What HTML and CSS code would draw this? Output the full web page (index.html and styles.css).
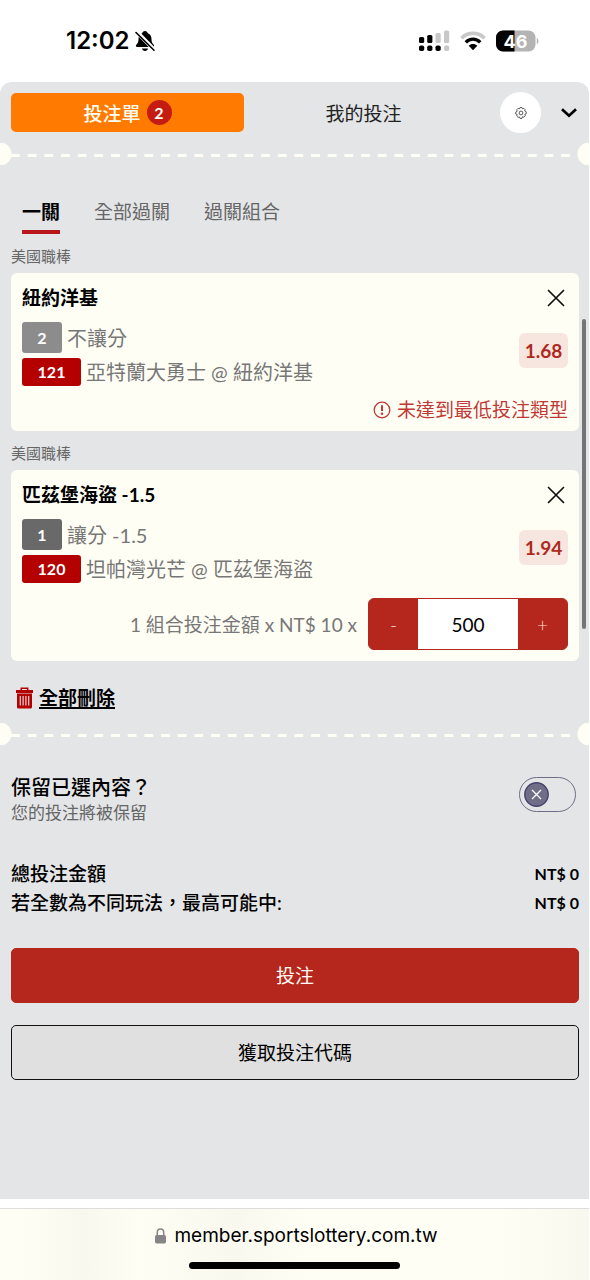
FILE: index.html
```html
<!DOCTYPE html>
<html lang="zh-Hant">
<head>
<meta charset="utf-8">
<meta name="viewport" content="width=device-width, initial-scale=1">
<title>投注單</title>
<link rel="stylesheet" href="styles.css">
</head>
<body>
<div class="page">
  <header class="status">
    <div class="status-left">
      <span class="time">12:02</span>
      <svg width="20" height="22" viewBox="0 0 20 22" aria-hidden="true">
        <path d="M10 1c-1.500 0-2.600 1-2.800 2.300C4.500 4.300 3.500 6.700 3.500 9.300c0 3-1 4.300-2.200 5.500-.8.9-.4 2.200.9 2.200h15.600c1.300 0 1.700-1.300.9-2.200-1.200-1.200-2.200-2.500-2.200-5.500 0-2.600-1-5-3.700-6C12.600 2 11.500 1 10 1z"/>
        <path d="M7 18.500h6c-.3 1.500-1.500 2.500-3 2.500s-2.700-1-3-2.500z"/>
        <path d="M1.500 1.500l18 18.500" stroke="#fff" stroke-width="4"/>
        <path d="M1 2.500l18 17.800" stroke="#000" stroke-width="1.600" stroke-linecap="round"/>
      </svg>
    </div>
    <div class="status-right">
      <svg width="31" height="22" viewBox="0 0 31 22" aria-hidden="true">
        <g fill="#c8c8c8"><rect x="16.500" y="3" width="5.200" height="10" rx="1.500"/><rect x="25" y="0.500" width="5.200" height="12.500" rx="1.500"/><rect x="25" y="15.500" width="5.200" height="5.500" rx="1.800"/></g>
        <rect x="0" y="7" width="5.200" height="6" rx="1.500"/><rect x="8.200" y="5" width="5.200" height="8" rx="1.500"/>
        <rect x="0" y="15.500" width="5.200" height="5.500" rx="1.800"/><rect x="8.200" y="15.500" width="5.200" height="5.500" rx="1.800"/><rect x="16.500" y="15.500" width="5.200" height="5.500" rx="1.800"/>
      </svg>
      <svg width="26" height="20" viewBox="0 0 26 20" fill="none" aria-hidden="true">
        <path d="M1.500 7.200C7.500.7 18.500.7 24.500 7.200" stroke="#c8c8c8" stroke-width="3.600"/>
        <path d="M5.800 11.300c4-4.200 10.400-4.200 14.400 0" stroke="#000" stroke-width="3.400"/>
        <path d="M8.700 14.800c2.300-2.500 6.300-2.500 8.600 0L13 19.200z" fill="#000"/>
      </svg>
      <svg width="43" height="22" viewBox="0 0 43 22" aria-hidden="true">
        <rect x="0" y="0.500" width="39.500" height="21" rx="7" fill="#b4b4b4"/>
        <path d="M7 .5h11.500v21H7a7 7 0 0 1-7-7v-7a7 7 0 0 1 7-7z"/>
        <path d="M40.800 8c2 .4 2.400 5.600 0 6z" fill="#b4b4b4"/>
        <text class="battery-text" x="19.500" y="17.500" text-anchor="middle">46</text>
      </svg>
    </div>
  </header>

  <main class="slip">
    <div class="topbar">
      <button class="top-tab top-tab-active" type="button">投注單<span class="count">2</span></button>
      <button class="top-tab" type="button">我的投注</button>
      <button class="gear" type="button" aria-label="設定">
        <svg width="12" height="12" viewBox="0 0 12 12" fill="none" stroke="#333" stroke-width=".8" stroke-linejoin="round" aria-hidden="true">
          <path d="M5 .6h2l.5 1.300 1.300-.6 1.300 1.300-.5 1.300 1.600.9v2l-1.400.5.5 1.500-1.400 1.400-1.400-.5L7 11.400H5l-.6-1.500-1.300.5-1.400-1.400.5-1.400L.8 7V5l1.400-.8-.5-1.400 1.400-1.400 1.300.5z"/><circle cx="6" cy="6" r="1.900"/>
        </svg>
      </button>
      <button class="plain" type="button" aria-label="收合">
        <svg width="16" height="10" viewBox="0 0 16 10" fill="none" stroke="#000" stroke-width="2.800" aria-hidden="true"><path d="M1 1.300l7 6.400 7-6.400"/></svg>
      </button>
    </div>

    <div class="tear"></div>

    <nav class="modes">
      <button class="mode mode-active" type="button">一關</button>
      <button class="mode" type="button">全部過關</button>
      <button class="mode" type="button">過關組合</button>
    </nav>

    <p class="league">美國職棒</p>
    <section class="card">
      <div class="card-head">
        <h2 class="pick">紐約洋基</h2>
        <button class="plain" type="button" aria-label="移除">
          <svg width="24" height="20" viewBox="0 0 24 20" fill="none" stroke="#111" stroke-width="1.700" stroke-linecap="round" aria-hidden="true"><path d="M4.500 2.500l15 15M19.500 2.500l-15 15"/></svg>
        </button>
      </div>
      <div class="card-body">
        <div class="lines">
          <div class="line"><span class="tag tag-light">2</span>不讓分</div>
          <div class="line"><span class="tag tag-red">121</span>亞特蘭大勇士 @ 紐約洋基</div>
        </div>
        <span class="odds">1.68</span>
      </div>
      <p class="warning">
        <svg width="18" height="18" viewBox="0 0 18 18" fill="none" stroke="#bf3a35" aria-hidden="true"><circle cx="9" cy="9" r="7.800" stroke-width="1.300"/><path d="M9 4.300v5.800" stroke-width="2"/><circle cx="9" cy="12.700" r="1.200" fill="#bf3a35" stroke="none"/></svg>
        未達到最低投注類型
      </p>
    </section>

    <p class="league">美國職棒</p>
    <section class="card">
      <div class="card-head">
        <h2 class="pick">匹茲堡海盜 -1.5</h2>
        <button class="plain" type="button" aria-label="移除">
          <svg width="24" height="20" viewBox="0 0 24 20" fill="none" stroke="#111" stroke-width="1.700" stroke-linecap="round" aria-hidden="true"><path d="M4.500 2.500l15 15M19.500 2.500l-15 15"/></svg>
        </button>
      </div>
      <div class="card-body">
        <div class="lines">
          <div class="line"><span class="tag tag-dark">1</span>讓分 -1.5</div>
          <div class="line"><span class="tag tag-red">120</span>坦帕灣光芒 @ 匹茲堡海盜</div>
        </div>
        <span class="odds">1.94</span>
      </div>
      <div class="stake">
        <label class="stake-label" for="amount">1 組合投注金額 x NT$ 10 x</label>
        <div class="stepper">
          <button class="step" type="button">-</button>
          <input class="amount" id="amount" type="text" inputmode="numeric" value="500">
          <button class="step" type="button">+</button>
        </div>
      </div>
    </section>

    <button class="clear" type="button">
      <svg width="17" height="22" viewBox="0 0 17 22" fill="none" aria-hidden="true">
        <path d="M5.300 3.500V1.300h6.400v2.200" stroke="#b50000" stroke-width="1.500"/>
        <path d="M0 3h17v3H0z" fill="#b50000"/>
        <path d="M1 6.500h15V20a1.500 1.500 0 0 1-1.500 1.500h-12A1.500 1.500 0 0 1 1 20z" fill="#b50000"/>
        <path d="M4.300 9v9.500M7.100 9v9.500M9.900 9v9.500M12.700 9v9.500" stroke="#e8d5d6" stroke-width="1.200"/>
      </svg>
      <span class="clear-text">全部刪除</span>
    </button>

    <div class="tear"></div>

    <div class="keep">
      <label for="keep">
        <span class="keep-title">保留已選內容？</span>
        <span class="keep-note">您的投注將被保留</span>
      </label>
      <span class="switch">
        <input class="switch-input" id="keep" type="checkbox">
        <svg class="knob" width="25" height="25" viewBox="0 0 25 25" aria-hidden="true"><circle cx="12.500" cy="12.500" r="11.700" fill="#6f6d88" stroke="#45436b" stroke-width="1.400"/><path d="M8 8l9 9M17 8l-9 9" stroke="#fff" stroke-width="1.300"/></svg>
      </span>
    </div>

    <dl class="totals">
      <div class="total"><dt>總投注金額</dt><dd class="sum">NT$ 0</dd></div>
      <div class="total"><dt>若全數為不同玩法，最高可能中:</dt><dd class="sum">NT$ 0</dd></div>
    </dl>

    <div class="actions">
      <button class="action action-main" type="button">投注</button>
      <button class="action" type="button">獲取投注代碼</button>
    </div>
    <div class="scrollbar"></div>
  </main>

  <footer class="browser">
    <div class="address">
      <svg width="11" height="16" viewBox="0 0 11 16" fill="none" aria-hidden="true"><path d="M2.300 8V4.500a3.200 3.400 0 0 1 6.400 0V8" stroke="#858585" stroke-width="1.500"/><rect y="7" width="11" height="8.500" rx="1.700" fill="#858585"/></svg>
      <span>member.sportslottery.com.tw</span>
    </div>
    <div class="home"></div>
  </footer>
</div>
</body>
</html>
```
FILE: styles.css
```css
* { box-sizing: border-box; }

body, h2, p, dl, dd { margin: 0; }

body {
  background: #fff;
  color: #000;
  font-family: Lato, "Noto Sans CJK TC", sans-serif;
  font-size: 19px;
}

button, input {
  margin: 0;
  padding: 0;
  border: 0;
  background: none;
  color: inherit;
  font: inherit;
}

svg { display: block; flex: none; }

.page {
  display: flex;
  flex-direction: column;
  min-height: 100vh;
  padding-right: 1px;
}

.status {
  display: flex;
  justify-content: space-between;
  align-items: center;
  height: 82px;
  padding: 0 50px 0 66px;
}
.status-left { display: flex; align-items: center; gap: 5px; }
.status-right { display: flex; align-items: center; gap: 10px; }
.time { font: 600 24px/30px Inter, sans-serif; }
.battery-text { font: 700 18px Inter, sans-serif; fill: #fff; }

.slip {
  position: relative;
  display: flex;
  flex: 1;
  flex-direction: column;
  padding: 10px 10px 0 11px;
  border-radius: 12px 12px 0 0;
  background: #e4e5e7;
  overflow: hidden;
}

.topbar { display: flex; align-items: center; padding-right: 2px; }
.top-tab {
  display: flex;
  flex: 1;
  align-items: center;
  justify-content: center;
  height: 39px;
  margin-right: 3px;
  padding-bottom: 1px;
  border-radius: 5px;
  color: #222;
}
.top-tab-active { background: #ff7a00; color: #fffef2; font-weight: 500; }
.count {
  width: 25px;
  margin-left: 6px;
  border-radius: 50%;
  background: #c41c12;
  font-size: 16px;
  font-weight: 700;
  line-height: 25px;
}
.gear {
  display: grid;
  place-items: center;
  width: 41px;
  height: 41px;
  margin: 0 20px 0 17px;
  border-radius: 50%;
  background: #fff;
}
.plain { display: grid; place-items: center; }

/* Ticket perforation with a half-round notch at each edge */
.tear {
  height: 22px;
  margin: 10px -10px 0 -11px;
  background:
    radial-gradient(circle at 0 50%, #fffef5 11px, transparent 12px),
    radial-gradient(circle at 100% 50%, #fffef5 11px, transparent 12px),
    linear-gradient(90deg, #fffef5 54%, transparent 54%) 11px 11px / calc((100% - 22px) / 34) 3px repeat-x;
}

.modes { display: flex; gap: 34px; margin-top: 35px; padding: 0 11px; }
.mode {
  padding-bottom: 6px;
  border-bottom: 4px solid transparent;
  color: #666;
  line-height: 24px;
}
.mode-active { border-color: #b8161a; color: #000; font-weight: 700; }

.league {
  margin: 12px 0 7px;
  color: #666;
  font-size: 15px;
  line-height: 20px;
}

.card { padding: 11px; border-radius: 6px; background: #fffef5; }
.card-head { display: flex; align-items: center; justify-content: space-between; }
.pick { font-size: 19px; font-weight: 700; line-height: 28px; }
.card-body { display: flex; align-items: flex-start; justify-content: space-between; margin-top: 10px; }
.lines { display: grid; gap: 5px; }
.line { display: flex; align-items: center; gap: 5px; color: #777; font-size: 20px; line-height: 28px; }
.tag {
  width: 40px;
  border-radius: 3px;
  color: #fff;
  font-size: 16px;
  font-weight: 700;
  line-height: 31px;
  text-align: center;
}
.tag-light { background: #8c8c8c; }
.tag-dark { background: #696969; }
.tag-red { width: 59px; background: #b50000; line-height: 28px; }
.odds {
  width: 49px;
  margin-top: 11px;
  border-radius: 6px;
  background: #f7e6df;
  color: #ae2a20;
  font-weight: 700;
  line-height: 35px;
  text-align: center;
}

.warning {
  display: flex;
  align-items: center;
  justify-content: flex-end;
  gap: 6px;
  margin-top: 14px;
  color: #bf3a35;
  line-height: 20px;
}

.stake { display: flex; align-items: center; justify-content: flex-end; gap: 11px; margin-top: 15px; }
.stake-label { padding-bottom: 2px; color: #777; }
.stepper {
  display: flex;
  width: 200px;
  height: 52px;
  border: 1px solid #b5261c;
  border-radius: 6px;
  background: #b5261c;
  overflow: hidden;
}
.step { flex: 1; color: #f7dcd2; font-weight: 300; }
.amount { width: 100px; background: #fff; font-size: 19px; text-align: center; }

.clear {
  display: flex;
  align-items: center;
  align-self: flex-start;
  gap: 6px;
  margin: 25px 0 3px 5px;
  font-weight: 700;
  line-height: 24px;
}
.clear-text { text-decoration: underline; text-decoration-thickness: 2px; text-underline-offset: 2px; }

.keep { display: flex; justify-content: space-between; margin: 29px 3px 0 0; line-height: 26px; }
.keep-title { display: block; font-size: 20px; font-weight: 500; }
.keep-note { display: block; color: #666; font-size: 17px; }
.switch { display: grid; align-items: center; align-self: flex-start; margin-top: 3px; }
.switch-input {
  grid-area: 1 / 1;
  width: 57px;
  height: 35px;
  appearance: none;
  border: 1px solid #6f6d88;
  border-radius: 18px;
}
.knob { grid-area: 1 / 1; margin-left: 5px; pointer-events: none; }

.totals { margin-top: 33px; font-weight: 500; line-height: 29px; }
.total { display: flex; justify-content: space-between; }
.sum { font-size: 16px; font-weight: 700; }

.actions { display: grid; gap: 22px; margin: 31px 0 22px; }
.action {
  height: 55px;
  padding-bottom: 2px;
  border: 1px solid #111;
  border-radius: 5px;
  background: #e0e0e0;
}
.action-main { border-color: #b5261c; background: #b5261c; color: #fffef5; }

.scrollbar {
  position: absolute;
  top: 237px;
  right: 3px;
  width: 4px;
  height: 310px;
  border-radius: 2px;
  background: #757575;
}

.browser {
  display: flex;
  flex-direction: column;
  align-items: center;
  margin-top: 9px;
  padding: 13px 0 11px;
  border-top: 1px solid #ddd;
  background: linear-gradient(90deg, #fffef5 4%, #f9f8ef 14%, #fffef5 24%, #f9f8ef 40%, #fffef5 52%, #fffef5 85%, #f9f8ef);
}
.address { display: flex; align-items: center; gap: 8px; padding-left: 4px; font: 400 19px/28px Inter, sans-serif; }
.home { width: 211px; height: 7px; margin-top: 12px; border-radius: 4px; background: #000; }
```
